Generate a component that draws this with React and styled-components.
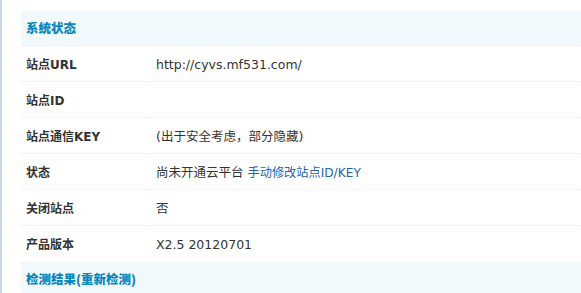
import styled, { createGlobalStyle } from "styled-components"

const Global = createGlobalStyle`
  html, body {
    margin: 0;
    padding: 0;
    background: #fff;
  }
  body {
    font: 12px/1.5 "DejaVu Sans", Verdana, "Noto Sans CJK SC", sans-serif;
    color: #333;
  }
`

const Frame = styled.div`
  border-left: 2px solid #c8d7e2;
  padding: 11px 0 0 19px;
  height: 293px;
  box-sizing: border-box;
  overflow: hidden;
`

const Table = styled.table`
  width: 100%;
  border-collapse: collapse;
  border-spacing: 0;
  table-layout: fixed;
`

const Partition = styled.th`
  background: #f2f9fd;
  color: #0986ba;
  font-weight: 900;
  text-align: left;
  padding: 0 5px;
  height: 34px;
  font-family: "Noto Sans CJK SC", sans-serif;
  font-size: 12.5px;
  border-bottom: 1px dotted #deeffb;
`

const Label = styled.td`
  padding: 3px 5px 0;
  height: 32px;
  font-weight: bold;
  color: #333;
  border-bottom: 1px dotted ${(p) => (p.$last ? "transparent" : "#deeffb")};
  font-family: "DejaVu Sans", "Noto Sans CJK SC", sans-serif;
  font-size: 12px;
`

const Value = styled.td`
  padding: 3px 5px 0;
  height: 32px;
  color: #333;
  border-bottom: 1px dotted ${(p) => (p.$last ? "transparent" : "#deeffb")};
  font-family: "DejaVu Sans", "Noto Sans CJK SC", sans-serif;
  font-size: 12.5px;
`

const Link = styled.a`
  color: #2366a8;
  text-decoration: none;
  margin-left: 4px;
  font-size: 12.2px;
`

const rows = [
  ["站点URL", "http://cyvs.mf531.com/"],
  ["站点ID", ""],
  ["站点通信KEY", "(出于安全考虑，部分隐藏)"],
  ["状态", "尚未开通云平台", "手动修改站点ID/KEY"],
  ["关闭站点", "否"],
  ["产品版本", "X2.5 20120701"],
]

export default function App() {
  return (
    <>
      <Global />
      <Frame>
        <Table>
          <colgroup>
            <col style={{ width: 130 }} />
            <col />
          </colgroup>
          <tbody>
            <tr>
              <Partition colSpan={2}>系统状态</Partition>
            </tr>
            {rows.map(([label, value, link], i) => {
              const last = i === rows.length - 1
              return (
                <tr key={label}>
                  <Label $last={last}>{label}</Label>
                  <Value $last={last}>
                    {value}
                    {link && <Link href="#">{link}</Link>}
                  </Value>
                </tr>
              )
            })}
            <tr>
              <Partition colSpan={2}>检测结果(重新检测)</Partition>
            </tr>
          </tbody>
        </Table>
      </Frame>
    </>
  )
}
